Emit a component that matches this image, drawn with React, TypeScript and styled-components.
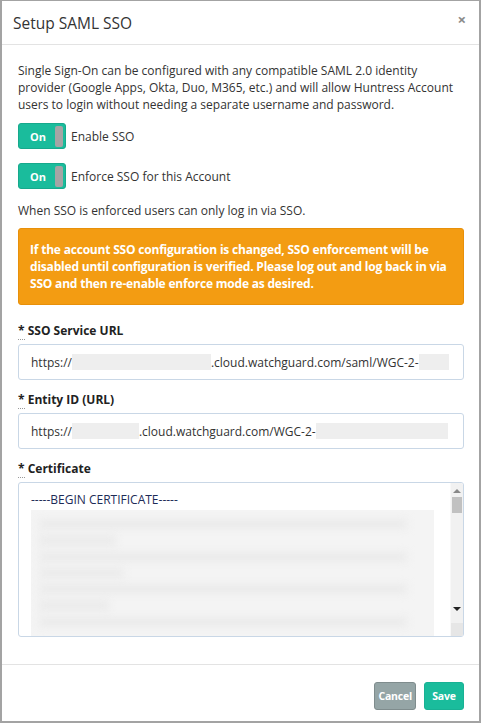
import React from "react";
import styled, { createGlobalStyle } from "styled-components";

const Global = createGlobalStyle`
  html, body { margin: 0; padding: 0; background: #fff; }
  body { font-family: "Open Sans", "Noto Sans", Arial, sans-serif; color: #333; }
  * { box-sizing: border-box; }
`;

const Modal = styled.div`
  width: 481px;
  height: 723px;
  display: flex;
  flex-direction: column;
  border: 2px solid #a3a3a3;
  border-top-width: 1px;
  background: #fff;
`;

const Header = styled.div`
  height: 44px;
  flex: none;
  display: flex;
  align-items: center;
  justify-content: space-between;
  padding: 0 13px 0 11px;
  border-bottom: 1px solid #e3e3e3;
`;

const Title = styled.h4`
  margin: 0;
  font-size: 15.5px;
  font-weight: 400;
  color: #333;
  line-height: 22px;
`;

const Close = styled.span`
  font-size: 15px;
  color: #8a8a8a;
  line-height: 1;
  margin-top: -6px;
  font-weight: 700;
`;

const Body = styled.div`
  flex: 1;
  padding: 17px 15px 0 16px;
  display: flex;
  flex-direction: column;
  font-size: 12px;
  line-height: 17px;
`;

const Para = styled.p<{ $mt?: number }>`
  margin: ${(p) => p.$mt ?? 0}px 0 0;
  color: #333;
`;

const ToggleRow = styled.div<{ $mt: number }>`
  display: flex;
  align-items: center;
  gap: 5px;
  margin-top: ${(p) => p.$mt}px;
  font-size: 12px;
`;

const Toggle = styled.div`
  width: 48px;
  height: 26px;
  border-radius: 3px;
  background: #1abc9c;
  border: 1px solid #17a98c;
  display: flex;
  align-items: center;
  padding: 2px;
`;

const ToggleText = styled.span`
  flex: 1;
  text-align: center;
  color: #fff;
  font-weight: 700;
  font-size: 11px;
`;

const Handle = styled.span`
  width: 8px;
  height: 21px;
  border-radius: 2px;
  background: #a5a5a5;
`;

const Alert = styled.div`
  margin-top: 9px;
  background: #f39c12;
  border: 1px solid #e8900a;
  border-radius: 3px;
  color: #fff;
  font-weight: 700;
  letter-spacing: -0.2px;
  padding: 12px 11px 12px 11px;
  line-height: 17px;
`;

const Label = styled.label<{ $mt: number }>`
  display: block;
  margin-top: ${(p) => p.$mt}px;
  font-weight: 700;
  color: #222;
`;

const Star = styled.abbr`
  text-decoration: none;
  border-bottom: 1px dotted #999;
`;

const Input = styled.div`
  margin-top: 5px;
  height: 36px;
  border: 1px solid #c9d7e6;
  border-radius: 3px;
  display: flex;
  align-items: center;
  padding: 0 12px;
  font-size: 12px;
  color: #333;
  white-space: nowrap;
  overflow: hidden;
`;

const Redact = styled.span<{ $w: number }>`
  display: inline-block;
  flex: none;
  width: ${(p) => p.$w}px;
  height: 16px;
  background: #eeeeee;
`;

const TextArea = styled.div`
  margin-top: 5px;
  height: 155px;
  border: 1px solid #c9d7e6;
  border-radius: 3px;
  display: flex;
  overflow: hidden;
`;

const TAContent = styled.div`
  flex: 1;
  padding: 9px 0 0 12px;
  display: flex;
  flex-direction: column;
  overflow: hidden;
`;

const CertHead = styled.div`
  font-size: 12px;
  color: #1d2b57;
  line-height: 16px;
`;

const Blur = styled.div`
  margin-top: 2px;
  width: 403px;
  flex: 1;
  background: #f4f4f4;
  display: flex;
  flex-direction: column;
  gap: 8px;
  padding: 10px 8px;
  overflow: hidden;
`;

const BlurLine = styled.div<{ $w: number }>`
  height: 9px;
  width: ${(p) => p.$w}%;
  background: #e9e9e9;
  filter: blur(4px);
`;

const Scroll = styled.div`
  width: 13px;
  background: #f1f1f1;
  display: flex;
  flex-direction: column;
  align-items: center;
  border-left: 1px solid #f8f8f8;
`;

const Arrow = styled.span<{ $down?: boolean }>`
  width: 0;
  height: 0;
  border-left: 4px solid transparent;
  border-right: 4px solid transparent;
  ${(p) =>
    p.$down
      ? "border-top: 4px solid #222; margin: auto 0 12px;"
      : "border-bottom: 4px solid #888; margin: 6px 0 4px;"}
`;

const Thumb = styled.span`
  width: 10px;
  height: 16px;
  background: #c1c1c1;
`;

const Grip = styled.span`
  width: 13px;
  height: 13px;
  background: #e6e6e6;
`;

const Footer = styled.div`
  flex: none;
  border-top: 1px solid #e3e3e3;
  display: flex;
  justify-content: flex-end;
  gap: 8px;
  padding: 17px 15px 11px;
`;

const Button = styled.button<{ $variant: "cancel" | "save" }>`
  height: 28px;
  padding: 0 3px;
  min-width: 40px;
  border-radius: 3px;
  font-family: inherit;
  font-size: 10.5px;
  font-weight: 700;
  letter-spacing: -0.2px;
  color: #fff;
  background: ${(p) => (p.$variant === "save" ? "#1abc9c" : "#95a5a6")};
  border: 1px solid ${(p) => (p.$variant === "save" ? "#18b194" : "#7f8c8d")};
`;

export default function App() {
  return (
    <>
      <Global />
      <Modal>
        <Header>
          <Title>Setup SAML SSO</Title>
          <Close>×</Close>
        </Header>
        <Body>
          <Para>
            Single Sign-On can be configured with any compatible SAML 2.0 identity
            provider (Google Apps, Okta, Duo, M365, etc.) and will allow Huntress Account
            users to login without needing a separate username and password.
          </Para>
          <ToggleRow $mt={10}>
            <Toggle>
              <ToggleText>On</ToggleText>
              <Handle />
            </Toggle>
            Enable SSO
          </ToggleRow>
          <ToggleRow $mt={14}>
            <Toggle>
              <ToggleText>On</ToggleText>
              <Handle />
            </Toggle>
            Enforce SSO for this Account
          </ToggleRow>
          <Para $mt={13}>When SSO is enforced users can only log in via SSO.</Para>
          <Alert>
            If the account SSO configuration is changed, SSO enforcement will be
            disabled until configuration is verified. Please log out and log back in via
            SSO and then re-enable enforce mode as desired.
          </Alert>
          <Label $mt={17}>
            <Star title="required">*</Star> SSO Service URL
          </Label>
          <Input>
            https://
            <Redact $w={139} />
            .cloud.watchguard.com/saml/WGC-2-
            <Redact $w={30} />
          </Input>
          <Label $mt={11}>
            <Star title="required">*</Star> Entity ID (URL)
          </Label>
          <Input>
            https://
            <Redact $w={67} />
            .cloud.watchguard.com/WGC-2-
            <Redact $w={132} />
          </Input>
          <Label $mt={11}>
            <Star title="required">*</Star> Certificate
          </Label>
          <TextArea>
            <TAContent>
              <CertHead>-----BEGIN CERTIFICATE-----</CertHead>
              <Blur>
                <BlurLine $w={95} />
                <BlurLine $w={20} />
                <BlurLine $w={95} />
                <BlurLine $w={22} />
                <BlurLine $w={95} />
                <BlurLine $w={18} />
                <BlurLine $w={95} />
              </Blur>
            </TAContent>
            <Scroll>
              <Arrow />
              <Thumb />
              <Arrow $down />
              <Grip />
            </Scroll>
          </TextArea>
        </Body>
        <Footer>
          <Button $variant="cancel">Cancel</Button>
          <Button $variant="save">Save</Button>
        </Footer>
      </Modal>
    </>
  );
}
